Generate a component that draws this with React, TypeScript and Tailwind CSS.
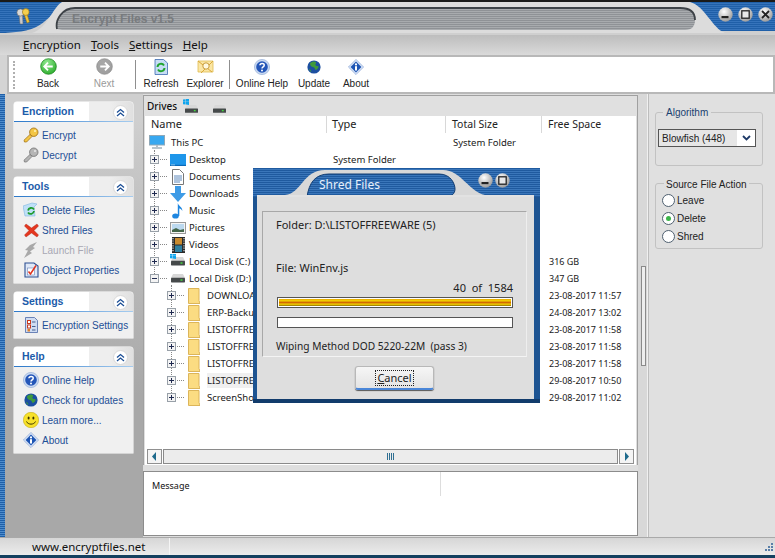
import React from "react";

const F = "font-['Noto_Sans','Liberation_Sans',sans-serif]";
const L = "font-['Liberation_Sans',sans-serif]";

const Arrow = ({ c, dir }: { c: string; dir: 1 | -1 }) => (
  <svg width="17" height="17" viewBox="0 0 18 18">
    <defs>
      <radialGradient id={`g${c.slice(1)}`} cx="0.4" cy="0.25" r="0.9">
        <stop offset="0" stopColor={c === "#1fa51f" ? "#8fe88f" : "#a8a8a8"} />
        <stop offset="1" stopColor={c} />
      </radialGradient>
    </defs>
    <circle cx="9" cy="9" r="8.3" fill={`url(#g${c.slice(1)})`} stroke={c === "#1fa51f" ? "#0e7a12" : "#8a8a8a"} strokeWidth="0.7" />
    <path d={dir === -1 ? "M13.5 9H5M8.5 5L4.5 9l4 4" : "M4.5 9H13M9.5 5l4 4-4 4"} fill="none" stroke="#fff" strokeWidth="1.9" />
  </svg>
);
const Help = ({ s = 16 }: { s?: number }) => (
  <svg width={s} height={s} viewBox="0 0 16 16">
    <circle cx="8" cy="8" r="7.6" fill="#c9d9f2" stroke="#8aa6d4" strokeWidth="0.6" />
    <circle cx="8" cy="8" r="5.8" fill="#2456b8" />
    <path d="M5.9 6.3c.2-2.6 4.4-2.5 4.3-.1 0 1.6-2.1 1.6-2.2 3.3" fill="none" stroke="#fff" strokeWidth="1.5" />
    <circle cx="8" cy="11.6" r="1" fill="#fff" />
  </svg>
);
const Globe = ({ s = 14 }: { s?: number }) => (
  <svg width={s} height={s} viewBox="0 0 14 14">
    <circle cx="7" cy="7" r="6.6" fill="#1c4fa0" />
    <path d="M3 3.2c2-2 5-2.2 6-1 .6 1.3-.8 1.3-.6 2.8.8 1.6 2.3.3 3.2 1.6-.1 1.8-1.7 3.6-3 3.4-.9-1.6-1-2.5-2.6-3C4.500 6.800 3 5.800 3 3.200z" fill="#3f9a3c" />
    <path d="M2 9c1 0 2 1 2.500 3C3.200 11.400 2.400 10.200 2 9z" fill="#3f9a3c" />
  </svg>
);
const Info = ({ s = 16 }: { s?: number }) => (
  <svg width={s} height={s} viewBox="0 0 16 16">
    <path d="M8 .4 15.600 8 8 15.600.4 8z" fill="#d5e2f6" stroke="#7c9ad0" strokeWidth="0.6" />
    <path d="M8 2.600 13.400 8 8 13.400 2.600 8z" fill="#1c54b4" />
    <circle cx="8" cy="5.400" r="1.100" fill="#fff" />
    <rect x="7" y="7.200" width="2" height="4.300" fill="#fff" />
  </svg>
);
const Key = ({ gold }: { gold?: boolean }) => {
  const f = gold ? "#f3c645" : "#b5b5b5";
  const st = gold ? "#9a6a10" : "#6f6f6f";
  return (
    <svg width="16" height="16" viewBox="0 0 16 16">
      <path d="M1 13.200 7 7.500 9 9.500 3.600 15H1.500z" fill={f} stroke={st} strokeWidth="0.7" />
      <circle cx="10.800" cy="5.200" r="4.200" fill={f} stroke={st} strokeWidth="0.8" />
      <circle cx="12" cy="4" r="1" fill={gold ? "#fff3b8" : "#e8e8e8"} />
    </svg>
  );
};
const DelFiles = () => (
  <svg width="16" height="16" viewBox="0 0 16 16">
    <path d="M0 4 9 1l5 1-3 3 1 9H2z" fill="#bfe0f7" stroke="#7fb5e0" strokeWidth="0.6" />
    <path d="M5 8.500a3.300 3.300 0 0 1 6-1" fill="none" stroke="#1f9c2d" strokeWidth="1.800" />
    <path d="M11 9a3.300 3.300 0 0 1-6 1.500" fill="none" stroke="#1f9c2d" strokeWidth="1.800" />
  </svg>
);
const RedX = () => (
  <svg width="15" height="15" viewBox="0 0 15 15">
    <path d="M2 1 7.500 5 13 1l1.500 2L10 7.500l4.500 4.500L13 14 7.500 10 2 14 .5 12 5 7.500.5 3z" fill="#e4361f" stroke="#a8220f" strokeWidth="0.4" />
  </svg>
);
const Bolt = () => (
  <svg width="16" height="16" viewBox="0 0 16 16">
    <path d="M14 0 7 3 2 8l3 .5L1 16l8-5-2-1.500 5-3.500L10 5z" fill="#a9a9a9" />
  </svg>
);
const Props = () => (
  <svg width="15" height="16" viewBox="0 0 15 16">
    <path d="M1 1h9l4 3v11H1z" fill="#dfe8f7" stroke="#2c4f92" strokeWidth="1.100" />
    <rect x="3.500" y="6" width="7" height="7" fill="#fff" stroke="#6a83b8" strokeWidth="0.6" />
    <path d="M4.500 9.500 6.500 12 12 3.500" fill="none" stroke="#e0321c" strokeWidth="1.500" />
  </svg>
);
const Gear = () => (
  <svg width="14" height="16" viewBox="0 0 14 16">
    <path d="M1.500.5h9l3 3v12h-12z" fill="#cfdcf2" stroke="#4d6aa8" strokeWidth="0.8" />
    <rect x="3.500" y="3.500" width="3" height="3" fill="#fff" stroke="#c9391d" />
    <rect x="3.500" y="8" width="3" height="3" fill="#fff" stroke="#c9391d" />
    <rect x="3.500" y="12" width="2.500" height="2.500" fill="#e0802a" />
    <path d="M8 5h3.500M8 9.500h3.500M8 13h3.500" stroke="#47608f" strokeWidth="1" />
  </svg>
);
const Smile = () => (
  <svg width="16" height="16" viewBox="0 0 16 16">
    <circle cx="8" cy="8" r="7.700" fill="#f7e12a" stroke="#b9a10a" strokeWidth="0.5" />
    <ellipse cx="5.600" cy="6" rx="1" ry="1.500" fill="#3a3300" />
    <ellipse cx="10.400" cy="6" rx="1" ry="1.500" fill="#3a3300" />
    <path d="M3.500 9.500c1.500 3.500 7.500 3.500 9 0" fill="none" stroke="#3a3300" strokeWidth="1" />
  </svg>
);
const RefreshDoc = () => (
  <svg width="14" height="16" viewBox="0 0 14 16">
    <path d="M1 .5h8.500l4 3.500v11.500H1z" fill="#c7ddf5" stroke="#3c6bb0" strokeWidth="0.8" />
    <path d="M3.500 8a3.500 3.500 0 0 1 6.500-1.500" fill="none" stroke="#21a52f" strokeWidth="2" />
    <path d="M10.500 9a3.500 3.500 0 0 1-6.500 1.500" fill="none" stroke="#21a52f" strokeWidth="2" />
  </svg>
);
const ExplorerIco = () => (
  <svg width="17" height="16" viewBox="0 0 17 16">
    <path d="M1 2h15v11H1z" fill="#fbe6a4" stroke="#e0bb50" strokeWidth="0.8" />
    <path d="M1 2l14 11M16 2 4 14" stroke="#d9a83a" strokeWidth="1" />
    <circle cx="9" cy="7" r="3.200" fill="#fff8df" stroke="#c79c3a" />
  </svg>
);
const Win = ({ s = 6 }: { s?: number }) => (
  <svg width={s} height={s} viewBox="0 0 6 6">
    <path d="M0 .6 2.600.2v2.500H0zM3 .1 6 0v2.700H3zM0 3.100h2.600v2.400L0 5.200zM3 3.100h3V6l-3-.4z" fill="#0fa5ee" />
  </svg>
);
const Drive = ({ w = 14 }: { w?: number }) => (
  <svg width={w} height={w * 0.6} viewBox="0 0 14 8.400">
    <path d="M2 0h10l2 4H0z" fill="#d8d8d8" />
    <rect x="0" y="3.800" width="14" height="4.600" rx="0.600" fill="#45494a" />
    <rect x="9.500" y="5.300" width="2" height="1.500" fill="#41d63e" />
  </svg>
);
const Exp = ({ minus }: { minus?: boolean }) => (
  <span className="relative z-10 block w-[9px] h-[9px] border border-[#98a0a8] bg-[#f4f4f4] shrink-0">
    <span className="absolute left-[1px] right-[1px] top-[3px] h-px bg-[#202a50]" />
    {!minus && <span className="absolute top-[1px] bottom-[1px] left-[3px] w-px bg-[#202a50]" />}
  </span>
);
const DesktopIco = () => (
  <svg width="16" height="12" viewBox="0 0 16 12"><rect width="16" height="12" fill="#1e96ea" /><rect y="10.800" width="16" height="1.200" fill="#0b69b7" /><path d="M1 10.900h4" stroke="#fff" strokeWidth="0.5" /></svg>
);
const DocIco = () => (
  <svg width="12" height="16" viewBox="0 0 12 16"><path d="M.5.500h7l4 4v11H.500z" fill="#fff" stroke="#777" /><path d="M2 7h8M2 9h8M2 11h8M2 13h6" stroke="#356aa8" strokeWidth="0.8" /></svg>
);
const DlIco = () => (
  <svg width="16" height="16" viewBox="0 0 16 16"><path d="M5 0h6v7h5l-8 9-8-9h5z" fill="#3e9be6" /></svg>
);
const MusicIco = () => (
  <svg width="12" height="16" viewBox="0 0 12 16"><ellipse cx="3.500" cy="13" rx="3.300" ry="2.600" fill="#1d86e0" /><path d="M5.800 13V0c.5 3 5 4 4.500 8-.8-2-2.500-2.500-3-2.500V13z" fill="#1d86e0" /></svg>
);
const PicIco = () => (
  <svg width="16" height="12" viewBox="0 0 16 12"><rect x="0.500" y="0.500" width="15" height="11" fill="#f5f5f5" stroke="#9a9a9a" /><rect x="2" y="2" width="12" height="8" fill="#bcd9ef" /><path d="M2 8l4-2 4 2 4-1v3H2z" fill="#44664a" /></svg>
);
const VidIco = () => (
  <svg width="13" height="16" viewBox="0 0 13 16"><rect width="13" height="16" fill="#2a2a2a" /><rect x="3" y="1" width="7" height="6.500" fill="#c98a2e" /><rect x="3" y="8.500" width="7" height="6.500" fill="#2e7fa0" /><path d="M1 1v14M12 1v14" stroke="#ddd" strokeWidth="1.200" strokeDasharray="1.200 1.200" /></svg>
);
const Folder = () => (
  <svg width="12" height="16" viewBox="0 0 12 16"><path d="M.500.500h10.500v12l1 3H.500z" fill="#fbdc82" stroke="#dcb55a" /></svg>
);
const PcIco = () => (
  <svg width="16" height="15" viewBox="0 0 16 15"><rect x="0.500" y="0.500" width="15" height="9.500" fill="#38a8f0" stroke="#8fa8b8" /><path d="M7 10h2v2H7z" fill="#b5bfc6" /><path d="M3 13h10" stroke="#9eb0bc" strokeWidth="1.500" /></svg>
);

const Chevrons = () => (
  <span className="w-[15px] h-[15px] rounded-full bg-white border border-[#d8d8d8] flex items-center justify-center">
    <svg width="9" height="9" viewBox="0 0 9 9"><path d="M1 4.500 4.500 1.500 8 4.500M1 8l3.500-3L8 8" fill="none" stroke="#1c4f96" strokeWidth="1.300" /></svg>
  </span>
);

type Item = { ic: React.ReactNode; t: string; off?: boolean };
const Card = ({ title, items }: { title: string; items: Item[] }) => (
  <div className="w-[119px] bg-[#f0f0f0] rounded-t-[3px] shadow-[0_0_0_0.5px_#fff]">
    <div className="relative h-[20px] flex items-center justify-between pl-2 pr-[5px] bg-[linear-gradient(90deg,#fff_0,#fff_75px,#eeeeee_75px,#eeeeee_95px,#e0e0e0_100%)] rounded-t-[3px]">
      <span className={`${L} text-[10.500px] font-bold text-[#1c5caa]`}>{title}</span>
      <Chevrons />
      <span className="absolute left-0 right-0 bottom-0 h-px bg-[linear-gradient(90deg,#2b78c9,#a7cdf0)]" />
    </div>
    <div className="py-[3px] flex flex-col">
      {items.map((i) => (
        <div key={i.t} className="h-[20px] flex items-center pl-2">
          <span className="w-[20px] flex items-center justify-center shrink-0 -ml-px">{i.ic}</span>
          <span className={`${L} ml-[1px] text-[10px] whitespace-nowrap ${i.off ? "text-[#a8a8b4]" : "text-[#1d4f96]"}`}>{i.t}</span>
        </div>
      ))}
    </div>
  </div>
);

const TB = ({ w, ic, t, off }: { w: string; ic: React.ReactNode; t: string; off?: boolean }) => (
  <div className={`${w} flex flex-col items-center shrink-0`}>
    <span className="h-[17px] flex items-center justify-center">{ic}</span>
    <span className={`${L} text-[10px] leading-[15px] mt-[1px] whitespace-nowrap ${off ? "text-[#9a9a9a]" : "text-[#222]"}`}>{t}</span>
  </div>
);
const Sep = () => <span className="w-px h-[29px] bg-[#8f8f8f] shrink-0" />;

const Row = ({ lvl, ic, name, type, total, free, minus, sel }: any) => (
  <div className="h-[17px] flex items-center text-[9.500px] text-[#1a1a1a] whitespace-nowrap">
    <div className="w-[184px] shrink-0 flex items-center overflow-hidden">
      {lvl === 0 && (
        <span className="w-[40px] flex items-center pl-[1px] shrink-0">
          <Exp minus={minus} />
          <span className="w-[7px] border-t border-dotted border-[#888] ml-px" />
          <span className="w-[20px] flex justify-center ml-px">{ic}</span>
        </span>
      )}
      {lvl === 1 && (
        <span className="w-[58px] flex items-center pl-[18px] shrink-0">
          <Exp />
          <span className="w-[7px] border-t border-dotted border-[#888] ml-px" />
          <span className="w-[14px] flex justify-center ml-[3px]">{ic}</span>
        </span>
      )}
      <span className={`pt-[1px] ${sel ? "bg-[#f0f0f0] w-full" : ""}`}>{name}</span>
    </div>
    <div className="w-[119px] shrink-0 pt-[1px]">{type}</div>
    <div className="w-[97px] shrink-0 pt-[1px]">{total}</div>
    <div className="shrink-0 text-[9px]">{free}</div>
  </div>
);

const Radio = ({ t, on }: { t: string; on?: boolean }) => (
  <div className={`${L} h-[18px] flex items-center gap-[2px] text-[10px] text-[#222]`}>
    <span className="w-[13px] h-[13px] rounded-full border border-[#4f6070] bg-white flex items-center justify-center">
      {on && <span className="w-[5px] h-[5px] rounded-full bg-[#3cb54a]" />}
    </span>
    {t}
  </div>
);

const Orb = ({ kind }: { kind: "min" | "max" | "x" }) => (
  <svg width="15" height="15" viewBox="0 0 15 15">
    <defs>
      <radialGradient id="orb" cx="0.4" cy="0.3" r="0.8">
        <stop offset="0" stopColor="#fff" />
        <stop offset="1" stopColor="#8d8d8d" />
      </radialGradient>
    </defs>
    <circle cx="7.500" cy="7.500" r="7.200" fill="url(#orb)" />
    {kind === "min" && <rect x="3.500" y="9" width="7" height="2.200" fill="#222" />}
    {kind === "max" && <rect x="3.800" y="3.800" width="7.400" height="7.400" fill="#e8e8e8" stroke="#222" strokeWidth="1.300" />}
    {kind === "x" && <path d="M4 4l7 7M11 4l-7 7" stroke="#222" strokeWidth="1.800" />}
  </svg>
);

const TitleChrome = () => (
  <svg className="absolute inset-0" width="775" height="33" viewBox="0 0 775 33">
    <defs>
      <pattern id="st" width="4" height="2" patternUnits="userSpaceOnUse"><rect width="4" height="1" fill="#8f9296" /><rect y="1" width="4" height="1" fill="#a8abae" /></pattern>
      <pattern id="bl" width="3" height="2" patternUnits="userSpaceOnUse"><rect width="3" height="1" fill="#1f5fa8" /><rect y="1" width="3" height="1" fill="#3573bb" /></pattern>
    </defs>
    <rect width="775" height="33" fill="#cfcfcf" />
    <path d="M0 0H70C55 5 52 16 38 24 30 29 14 31 0 31z" fill="url(#bl)" />
    <path d="M680 0H775V29H722C706 29 705 6 680 0z" fill="url(#bl)" />
    <path d="M62 0H690C705 4 712 26 725 31L32 31C48 26 52 6 62 0z" fill="#dcdcdc" />
    <path d="M57 27C55 18 62 6 75 6H680C692 6 695 12 695 18 695 24 692 28 685 28H62z" fill="url(#st)" />
    <path d="M57 27C55 18 62 6 75 6H680C692 6 695 12 695 18" fill="none" stroke="#3d4247" strokeWidth="1.800" />
  </svg>
);

const DialogChrome = () => (
  <svg className="absolute left-0 top-0" width="287" height="29" viewBox="0 0 287 29">
    <defs>
      <pattern id="bd" width="3" height="2" patternUnits="userSpaceOnUse"><rect width="3" height="1" fill="#1f5a9f" /><rect y="1" width="3" height="1" fill="#3a76ba" /></pattern>
    </defs>
    <rect width="287" height="29" fill="url(#bd)" />
    <path d="M4 29V27H32C48 26 50 2 72 2H190C208 2 216 24 232 27H281V29z" fill="#d8d8d8" />
    <path d="M54 29C56 15 62 6 76 6H186C198 6 202 16 202 21 202 26 198 29 192 29z" fill="url(#bd)" stroke="#143f74" strokeWidth="1" />
    <rect x="4" y="27" width="277" height="2" fill="#e2e2e2" />
  </svg>
);

const Prog = ({ fill }: { fill?: boolean }) => (
  <div className="h-[11px] ml-px border border-[#555] bg-white p-[1px]">
    {fill && <div className="h-full bg-[linear-gradient(180deg,#e8a800_0,#f2d000_25%,#d06800_50%,#f2d000_75%,#8a6a00_100%)]" />}
  </div>
);

export default function App() {
  const rows = [
    { lvl: 0, ic: <DesktopIco />, name: "Desktop", type: "System Folder" },
    { lvl: 0, ic: <DocIco />, name: "Documents" },
    { lvl: 0, ic: <DlIco />, name: "Downloads" },
    { lvl: 0, ic: <MusicIco />, name: "Music" },
    { lvl: 0, ic: <PicIco />, name: "Pictures" },
    { lvl: 0, ic: <VidIco />, name: "Videos" },
    { lvl: 0, ic: <span className="relative block"><Drive /><span className="absolute -left-[1px] -top-[4px]"><Win /></span></span>, name: "Local Disk (C:)", free: "316 GB" },
    { lvl: 0, minus: true, ic: <Drive />, name: "Local Disk (D:)", free: "347 GB" },
    { lvl: 1, ic: <Folder />, name: "DOWNLOADS", free: "23-08-2017 11:57" },
    { lvl: 1, ic: <Folder />, name: "ERP-Backup", free: "24-08-2017 13:02" },
    { lvl: 1, ic: <Folder />, name: "LISTOFFREEWARE", free: "23-08-2017 11:58" },
    { lvl: 1, ic: <Folder />, name: "LISTOFFREEWARE", free: "23-08-2017 11:58" },
    { lvl: 1, ic: <Folder />, name: "LISTOFFREEWARE", free: "23-08-2017 11:58" },
    { lvl: 1, ic: <Folder />, name: "LISTOFFREEWARE", free: "29-08-2017 10:50", sel: true },
    { lvl: 1, ic: <Folder />, name: "ScreenShots", free: "29-08-2017 11:02" },
  ];
  return (
    <div className={`${F} relative w-[775px] h-[558px] overflow-hidden bg-[#d4d4d4] flex flex-col`}>
      <div className="h-[2px] bg-[#1a1a1a] shrink-0" />
      <div className="relative h-[33px] shrink-0">
        <TitleChrome />
        <span className="absolute left-[15px] top-[6px]">
          <svg width="16" height="17" viewBox="0 0 16 17">
            <path d="M4 6 5 16h3l-.5-10z" fill="#c9c9c9" stroke="#666" strokeWidth="0.5" />
            <circle cx="5.500" cy="4.500" r="3.600" fill="#d8d8d8" stroke="#666" strokeWidth="0.6" />
            <path d="M9 6l3 9 2.500-1L12 6z" fill="#f0c33c" stroke="#8a6a18" strokeWidth="0.5" />
            <circle cx="10.800" cy="4" r="3.400" fill="#f5cf4d" stroke="#8a6a18" strokeWidth="0.6" />
          </svg>
        </span>
        <span className={`${L} absolute left-[72px] top-[7px] text-[12px] font-bold leading-5 text-[#787b7e]`}>Encrypt Files v1.5</span>
        <span className="absolute right-[2px] top-[5px] flex gap-[5px]"><Orb kind="min" /><Orb kind="max" /><Orb kind="x" /></span>
      </div>
      <div className="h-[20px] shrink-0 flex items-center gap-[10px] pl-[23px] text-[11.500px] text-[#111] bg-[linear-gradient(180deg,#bdbdbd,#dadada)]">
        {["Encryption", "Tools", "Settings", "Help"].map((m) => (
          <span key={m}><span className="underline">{m[0]}</span>{m.slice(1)}</span>
        ))}
      </div>
      <div className="h-[39px] shrink-0 ml-[7px] border-2 border-r-2 border-[#b8b8b8] bg-white flex items-center">
        <span className="w-[7px] shrink-0 h-[28px] ml-[4px] border-l-2 border-dotted border-[#b0b0b0]" />
        <TB w="w-[56px]" ic={<Arrow c="#1fa51f" dir={-1} />} t="Back" />
        <TB w="w-[56px]" ic={<Arrow c="#9c9c9c" dir={1} />} t="Next" off />
        <span className="w-[3px]" /><Sep /><span className="w-[4px]" />
        <TB w="w-[42px]" ic={<RefreshDoc />} t="Refresh" />
        <span className="w-[2px]" />
        <TB w="w-[42px]" ic={<ExplorerIco />} t="Explorer" />
        <span className="w-[3px]" /><Sep /><span className="w-[2px]" />
        <TB w="w-[60px]" ic={<Help />} t="Online Help" />
        <TB w="w-[44px]" ic={<Globe />} t="Update" />
        <TB w="w-[40px]" ic={<Info />} t="About" />
      </div>

      <div className="flex-1 min-h-0 flex">
        <div className="w-[5px] shrink-0 bg-[repeating-linear-gradient(180deg,#1f5fa8_0,#1f5fa8_1px,#4d8ccc_1px,#4d8ccc_2px)]" />
        <div className="w-[138px] shrink-0 pt-[8px] pl-[9px] flex flex-col gap-[9px] bg-[linear-gradient(180deg,#cfcfcf_0,#cfcfcf_6%,#c8c8c8_15%,#a8a8a8_68%,#a8a8a8_100%)]">
          <Card title="Encription" items={[{ ic: <Key gold />, t: "Encrypt" }, { ic: <Key />, t: "Decrypt" }]} />
          <Card title="Tools" items={[{ ic: <DelFiles />, t: "Delete Files" }, { ic: <RedX />, t: "Shred Files" }, { ic: <Bolt />, t: "Launch File", off: true }, { ic: <Props />, t: "Object Properties" }]} />
          <Card title="Settings" items={[{ ic: <Gear />, t: "Encryption Settings" }]} />
          <Card title="Help" items={[{ ic: <Help />, t: "Online Help" }, { ic: <Globe />, t: "Check for updates" }, { ic: <Smile />, t: "Learn more..." }, { ic: <Info />, t: "About" }]} />
        </div>

        <div className="w-[495px] shrink-0 pt-[1px] flex flex-col bg-[#dedede]">
          <div className="flex-1 min-h-0 flex flex-col border border-[#a0a0a0] border-b-0">
            <div className="h-[20px] shrink-0 flex items-center pl-[3px] bg-[#e0e0e0] text-[10px] font-medium text-[#111]">
              <span className="w-[36px]">Drives</span>
              <span className="relative w-[30px] h-[14px]">
                <span className="absolute left-0 top-0"><Win /></span>
                <span className="absolute left-[2px] top-[6px]"><Drive w={13} /></span>
              </span>
              <span className="relative w-[13px] h-[14px]"><span className="absolute left-0 top-[6px]"><Drive w={13} /></span></span>
            </div>
            <div className="flex-1 min-h-0 relative mx-px bg-white flex flex-col">
              <div className="h-[17px] shrink-0 flex items-center text-[11px] text-[#222]">
                <span className="w-[182px] pl-[6px] border-r border-[#d8d8d8] h-full flex items-center">Name</span>
                <span className="w-[119px] pl-[5px] border-r border-[#d8d8d8] h-full flex items-center">Type</span>
                <span className="w-[96px] pl-[6px] border-r border-[#d8d8d8] h-full flex items-center text-[10.500px]">Total Size</span>
                <span className="pl-[6px] text-[10.500px]">Free Space</span>
              </div>
              <div className="flex-1 min-h-0 pl-[4px] overflow-hidden relative">
                <span className="absolute left-[9px] top-[17px] h-[126px] border-l border-dotted border-[#888]" />
                <span className="absolute left-[26px] top-[152px] h-[110px] border-l border-dotted border-[#888]" />
                <div className="h-[17px] mt-[1px] flex items-center text-[9.500px] text-[#1a1a1a] whitespace-nowrap">
                  <span className="w-[22px] shrink-0"><PcIco /></span>
                  <span className="w-[282px] shrink-0 pt-[1px]">This PC</span>
                  <span className="pt-[1px]">System Folder</span>
                </div>
                {rows.map((r, i) => <Row key={i} {...r} />)}
              </div>
              <div className="h-[15px] shrink-0 flex items-stretch gap-[1px] px-[2px] mb-[1px]">
                <span className="w-[15px] border border-[#909090] bg-[#f4f4f4] flex items-center justify-center">
                  <svg width="5" height="9" viewBox="0 0 5 9"><path d="M4 0v9L0 4.500z" fill="#1e6a8c" /></svg>
                </span>
                <span className="flex-1 border border-[#8a8a8a] bg-[#ececec] flex items-center justify-center gap-[1px]">
                  {[0, 1, 2, 3].map((i) => <span key={i} className="w-px h-[7px] bg-[#2f6f92]" />)}
                </span>
                <span className="w-[15px] border border-[#909090] bg-[#f4f4f4] flex items-center justify-center">
                  <svg width="5" height="9" viewBox="0 0 5 9"><path d="M1 0v9l4-4.500z" fill="#1e6a8c" /></svg>
                </span>
              </div>
            </div>
          </div>
          <div className="h-[65px] shrink-0 mt-[6px] mb-[1px] border border-[#8c8c8c] bg-white flex items-start text-[9px] text-[#111]">
            <span className="w-[297px] h-[24px] pl-[8px] pt-[3px] flex items-center border-r border-[#ddd]">Message</span>
          </div>
        </div>

        <div className="w-[3px] shrink-0 bg-[#d8d8d8]" />
        <div className="w-[7px] shrink-0 flex items-center bg-[#d8d8d8] border-r border-[#f0f0f0]">
          <span className="w-[5px] h-[100px] border border-[#8a8a8a] bg-[#eeeeee]" />
        </div>
        <div className="flex-1 pl-[6px] pt-[18px] bg-[#e0e0e0] border-l border-[#bdbdbd]">
          <div className="relative w-[108px] h-[54px] border border-[#c2c2c2] rounded-[3px]">
            <span className={`${L} absolute left-[7px] -top-[7px] px-[3px] bg-[#e0e0e0] text-[10px] leading-[14px] text-[#1a3f6f]`}>Algorithm</span>
            <div className="absolute left-[2px] top-[16px] w-[98px] h-[18px] border border-[#555] flex items-center bg-[#e6e6e6]">
              <span className={`${L} flex-1 pl-[3px] text-[10px] text-[#222] whitespace-nowrap border-r border-white h-full flex items-center`}>Blowfish (448)</span>
              <span className="w-[17px] h-full bg-white flex items-center justify-center">
                <svg width="9" height="6" viewBox="0 0 9 6"><path d="M1 1l3.500 3.500L8 1" fill="none" stroke="#1e3a68" strokeWidth="1.800" /></svg>
              </span>
            </div>
          </div>
          <div className="relative mt-[17px] w-[108px] h-[66px] border border-[#c2c2c2] rounded-[3px] pl-[6px] pt-[7px]">
            <span className={`${L} absolute left-[8px] -top-[6px] px-[2px] bg-[#e0e0e0] text-[10px] leading-[14px] text-[#222] whitespace-nowrap`}>Source File Action</span>
            <Radio t="Leave" />
            <Radio t="Delete" on />
            <Radio t="Shred" />
          </div>
        </div>
      </div>

      <div className="h-[18px] shrink-0 flex items-center border-t border-[#a9a9a9] bg-[linear-gradient(180deg,#d6d6d6,#ececec)] text-[11.500px] text-[#111]">
        <span className="w-[170px] pl-[32px] border-r border-[#f5f5f5] h-full flex items-center">www.encryptfiles.net</span>
        <span className="ml-auto mr-[2px] grid grid-cols-3 gap-[1px]">
          {[0, 0, 1, 0, 1, 1, 1, 1, 1].map((v, i) => <span key={i} className={`w-[2px] h-[2px] ${v ? "bg-[#5a7fa8]" : ""}`} />)}
        </span>
      </div>
      <div className="h-[3px] shrink-0 bg-[#14405f]" />

      <div className="absolute left-[253px] top-[168px] w-[287px] h-[235px] bg-[#1d5492] shadow-[inset_0_-4px_0_#123c6c] text-[#222]">
        <DialogChrome />
        <span className="absolute left-[66px] top-[9px] text-[12px] leading-4 text-[#e8f0fa]">Shred Files</span>
        <span className="absolute left-[225px] top-[5px] flex gap-[2px]"><Orb kind="min" /><Orb kind="max" /></span>
        <div className="absolute left-[4px] top-[29px] w-[277px] h-[202px] bg-[#dedede] pl-[5px] pr-[7px] pt-[14px] text-[11px]">
          <div className="h-[146px] border border-[#a8a8a8] border-r-[#eee] border-b-[#f4f4f4] px-[13px] flex flex-col">
            <div className="mt-[5px] leading-[16px]">Folder: D:\LISTOFFREEWARE (5)</div>
            <div className="mt-[27px] leading-[16px]">File: WinEnv.js</div>
            <div className="mt-[4px] leading-[16px] text-right whitespace-pre">40  of  1584</div>
            <div className="mt-[1px]"><Prog fill /></div>
            <div className="mt-[9px]"><Prog /></div>
            <div className="mt-[10px] leading-[16px] whitespace-pre text-[10.200px]">Wiping Method DOD 5220-22M  (pass 3)</div>
          </div>
          <div className="flex justify-center mt-[9px]">
            <span className="w-[79px] h-[24px] rounded-[3px] bg-[linear-gradient(180deg,#f6f6f6,#e4e4e4)] border border-[#b8b8b8] border-b-2 border-b-[#4a86d8] shadow-[0_1px_1px_#555] flex items-center justify-center">
              <span className="outline-1 outline-dotted outline-[#222] px-[1px] leading-[14px]"><span className="underline">C</span>ancel</span>
            </span>
          </div>
        </div>
      </div>
    </div>
  );
}
